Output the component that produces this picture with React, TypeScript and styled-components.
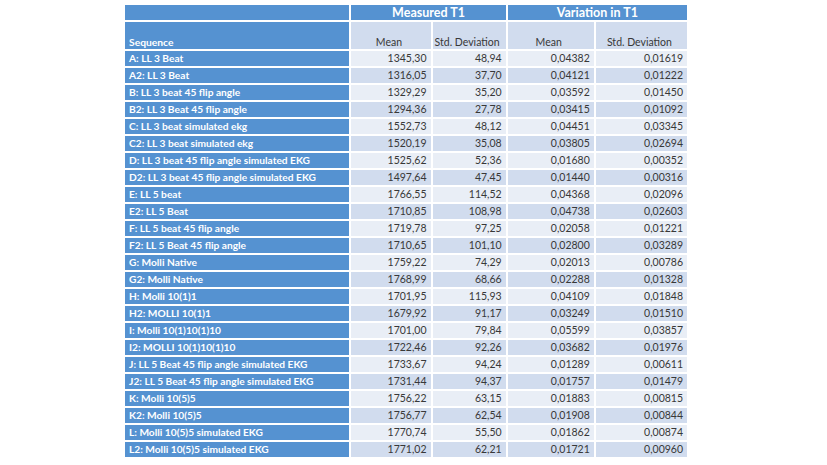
import React from 'react';
import styled, { createGlobalStyle } from 'styled-components';

const GlobalStyle = createGlobalStyle`
  html, body {
    margin: 0;
    padding: 0;
    background: #ffffff;
  }
  body {
    font-family: Lato, "Open Sans", "Liberation Sans", sans-serif;
  }
`;

const colors = {
  blue: '#5592d1',
  bandDark: '#d1dcee',
  bandLight: '#e9eef6',
  text: '#383838',
};

type Row = [string, string, string, string, string];

const rows: Row[] = [
  ['A: LL 3 Beat', '1345,30', '48,94', '0,04382', '0,01619'],
  ['A2: LL 3 Beat', '1316,05', '37,70', '0,04121', '0,01222'],
  ['B: LL 3 beat 45 flip angle', '1329,29', '35,20', '0,03592', '0,01450'],
  ['B2: LL 3 Beat 45 flip angle', '1294,36', '27,78', '0,03415', '0,01092'],
  ['C: LL 3 beat simulated ekg', '1552,73', '48,12', '0,04451', '0,03345'],
  ['C2: LL 3 beat simulated ekg', '1520,19', '35,08', '0,03805', '0,02694'],
  ['D: LL 3 beat 45 flip angle simulated EKG', '1525,62', '52,36', '0,01680', '0,00352'],
  ['D2: LL 3 beat 45 flip angle simulated EKG', '1497,64', '47,45', '0,01440', '0,00316'],
  ['E: LL 5 beat', '1766,55', '114,52', '0,04368', '0,02096'],
  ['E2: LL 5 Beat', '1710,85', '108,98', '0,04738', '0,02603'],
  ['F: LL 5 beat 45 flip angle', '1719,78', '97,25', '0,02058', '0,01221'],
  ['F2: LL 5 Beat 45 flip angle', '1710,65', '101,10', '0,02800', '0,03289'],
  ['G: Molli Native', '1759,22', '74,29', '0,02013', '0,00786'],
  ['G2: Molli Native', '1768,99', '68,66', '0,02288', '0,01328'],
  ['H: Molli 10(1)1', '1701,95', '115,93', '0,04109', '0,01848'],
  ['H2: MOLLI 10(1)1', '1679,92', '91,17', '0,03249', '0,01510'],
  ['I: Molli 10(1)10(1)10', '1701,00', '79,84', '0,05599', '0,03857'],
  ['I2: MOLLI 10(1)10(1)10', '1722,46', '92,26', '0,03682', '0,01976'],
  ['J: LL 5 Beat 45 flip angle simulated EKG', '1733,67', '94,24', '0,01289', '0,00611'],
  ['J2: LL 5 Beat 45 flip angle simulated EKG', '1731,44', '94,37', '0,01757', '0,01479'],
  ['K: Molli 10(5)5', '1756,22', '63,15', '0,01883', '0,00815'],
  ['K2: Molli 10(5)5', '1756,77', '62,54', '0,01908', '0,00844'],
  ['L: Molli 10(5)5 simulated EKG', '1770,74', '55,50', '0,01862', '0,00874'],
  ['L2: Molli 10(5)5 simulated EKG', '1771,02', '62,21', '0,01721', '0,00960'],
];

const Page = styled.div`
  padding: 3px 0 0 123px;
`;

const Table = styled.table`
  border-collapse: separate;
  border-spacing: 2px;
  table-layout: fixed;
  width: 566px;
`;

const Col = styled.col<{ $w: number }>`
  width: ${(p) => p.$w}px;
`;

const GroupCell = styled.th`
  height: 15px;
  padding: 0;
  background: ${colors.blue};
  color: #ffffff;
  font-size: 12.5px;
  font-weight: 700;
  text-align: center;
  line-height: 15px;
`;

const SubHeadCell = styled.th<{ $first?: boolean }>`
  height: 27px;
  padding: 0 ${(p) => (p.$first ? 0 : 4)}px 0 ${(p) => (p.$first ? 4 : 0)}px;
  background: ${(p) => (p.$first ? colors.blue : colors.bandDark)};
  color: ${(p) => (p.$first ? '#ffffff' : colors.text)};
  font-size: ${(p) => (p.$first ? 10.3 : 10.5)}px;
  font-weight: ${(p) => (p.$first ? 700 : 400)};
  text-align: ${(p) => (p.$first ? 'left' : 'center')};
  vertical-align: bottom;
  line-height: 13px;
`;

const NameCell = styled.td`
  height: 15px;
  padding: 0 0 0 4px;
  background: ${colors.blue};
  color: #ffffff;
  font-size: 10.2px;
  font-weight: 700;
  line-height: 15px;
  white-space: nowrap;
  overflow: hidden;
`;

const NumCell = styled.td<{ $band: boolean }>`
  height: 15px;
  padding: 0 4px 0 0;
  background: ${(p) => (p.$band ? colors.bandDark : colors.bandLight)};
  color: ${colors.text};
  font-size: 10.5px;
  text-align: right;
  line-height: 15px;
  white-space: nowrap;
`;

export default function App() {
  return (
    <Page>
      <GlobalStyle />
      <Table>
        <colgroup>
          <Col $w={224} />
          <Col $w={79} />
          <Col $w={73} />
          <Col $w={86} />
          <Col $w={91} />
        </colgroup>
        <thead>
          <tr>
            <GroupCell />
            <GroupCell colSpan={2}>Measured T1</GroupCell>
            <GroupCell colSpan={2}>Variation in T1</GroupCell>
          </tr>
          <tr>
            <SubHeadCell $first>Sequence</SubHeadCell>
            <SubHeadCell>Mean</SubHeadCell>
            <SubHeadCell>Std. Deviation</SubHeadCell>
            <SubHeadCell>Mean</SubHeadCell>
            <SubHeadCell>Std. Deviation</SubHeadCell>
          </tr>
        </thead>
        <tbody>
          {rows.map((r, i) => (
            <tr key={r[0]}>
              <NameCell>{r[0]}</NameCell>
              {r.slice(1).map((v, j) => (
                <NumCell key={j} $band={i % 2 === 1}>
                  {v}
                </NumCell>
              ))}
            </tr>
          ))}
        </tbody>
      </Table>
    </Page>
  );
}
